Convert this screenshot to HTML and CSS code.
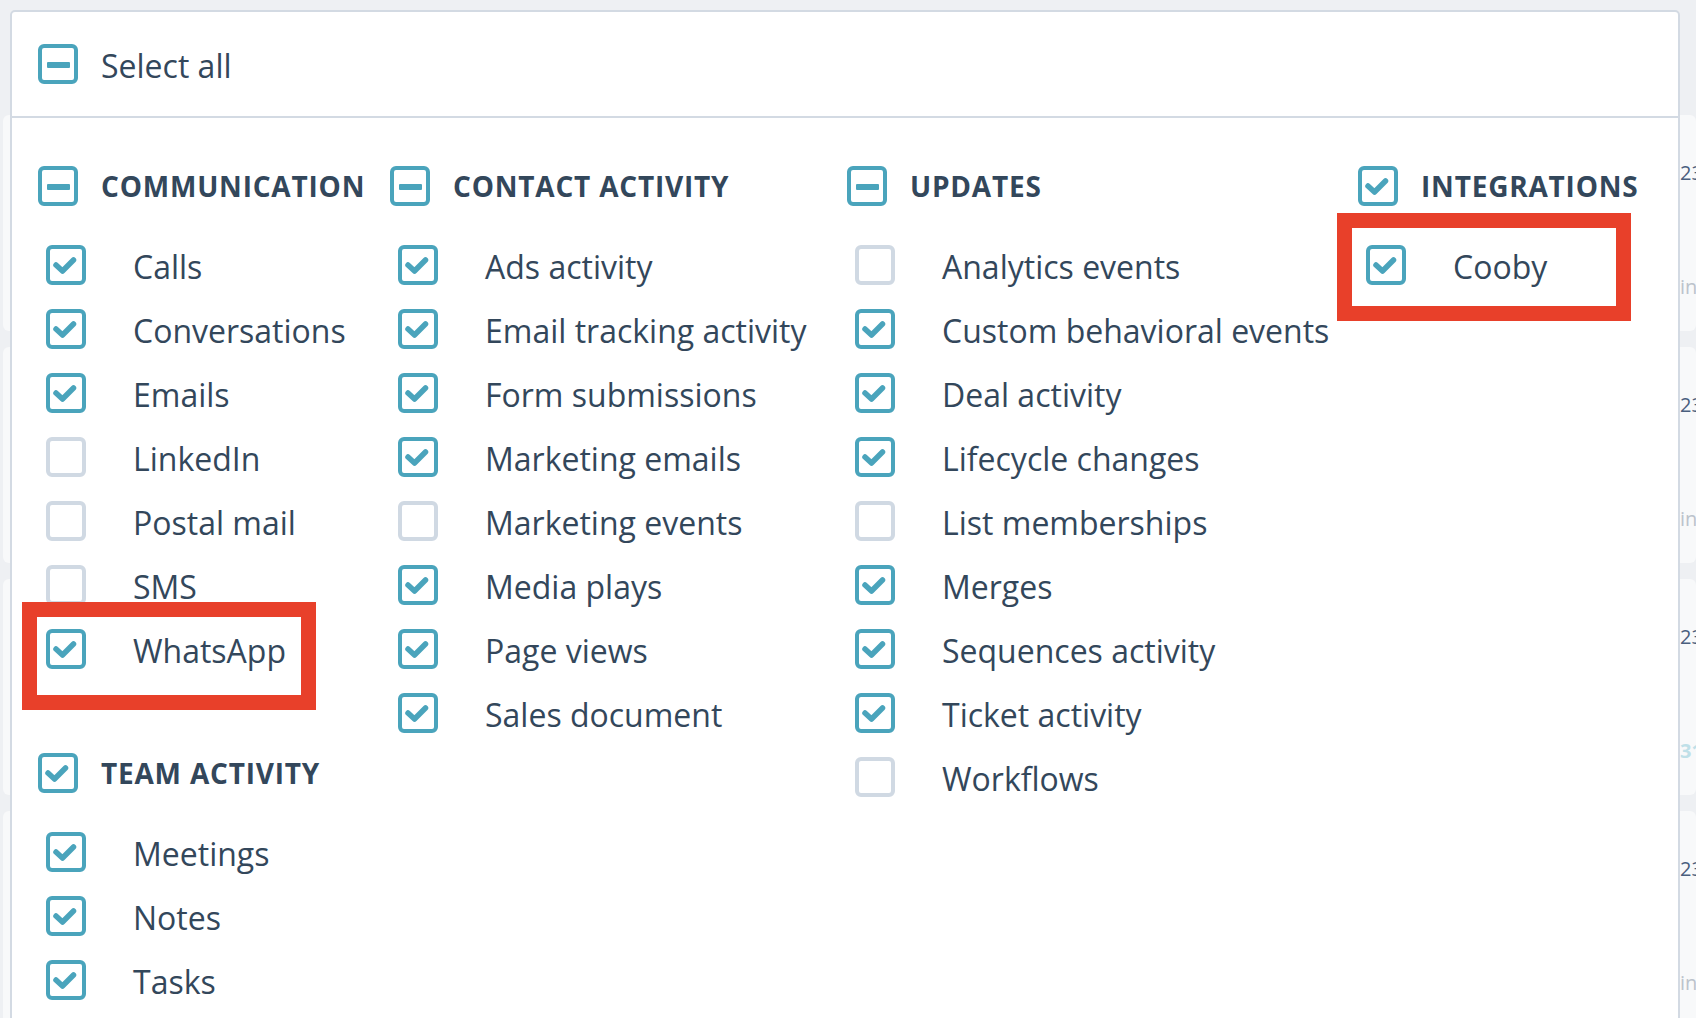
FILE: index.html
```html
<!DOCTYPE html>
<html>
  <head>
    <title>Activity filters</title>
    <link rel="stylesheet" href="styles.css">
  </head>
  <body>
    <!-- timeline cards behind the dropdown -->
    <div class="timeline">
      <div class="card"><div class="time">23</div><div class="meta">in</div></div>
      <div class="card"><div class="time">23</div><div class="meta">in</div></div>
      <div class="card"><div class="time">23</div><div class="meta link">31</div></div>
      <div class="card"><div class="time">23</div><div class="meta">in</div></div>
    </div>

    <div class="filter-panel">
      <div class="panel-head">
        <div class="select-all"><span class="box partial"></span><span class="label">Select all</span></div>
      </div>
      <div class="panel-body">
        <div class="col">
          <div class="group">
            <div class="group-title"><span class="box partial"></span>COMMUNICATION</div>
            <ul class="items">
              <li><span class="box checked"><svg viewBox="0 0 32 32"><polyline points="6,16 12.5,22 23.5,11"/></svg></span><span class="label">Calls</span></li>
              <li><span class="box checked"><svg viewBox="0 0 32 32"><polyline points="6,16 12.5,22 23.5,11"/></svg></span><span class="label">Conversations</span></li>
              <li><span class="box checked"><svg viewBox="0 0 32 32"><polyline points="6,16 12.5,22 23.5,11"/></svg></span><span class="label">Emails</span></li>
              <li><span class="box"></span><span class="label">LinkedIn</span></li>
              <li><span class="box"></span><span class="label">Postal mail</span></li>
              <li><span class="box"></span><span class="label">SMS</span></li>
              <li><span class="box checked"><svg viewBox="0 0 32 32"><polyline points="6,16 12.5,22 23.5,11"/></svg></span><span class="label">WhatsApp</span></li>
            </ul>
          </div>
          <div class="group">
            <div class="group-title"><span class="box checked"><svg viewBox="0 0 32 32"><polyline points="6,16 12.5,22 23.5,11"/></svg></span>TEAM ACTIVITY</div>
            <ul class="items">
              <li><span class="box checked"><svg viewBox="0 0 32 32"><polyline points="6,16 12.5,22 23.5,11"/></svg></span><span class="label">Meetings</span></li>
              <li><span class="box checked"><svg viewBox="0 0 32 32"><polyline points="6,16 12.5,22 23.5,11"/></svg></span><span class="label">Notes</span></li>
              <li><span class="box checked"><svg viewBox="0 0 32 32"><polyline points="6,16 12.5,22 23.5,11"/></svg></span><span class="label">Tasks</span></li>
            </ul>
          </div>
        </div>

        <div class="col">
          <div class="group">
            <div class="group-title"><span class="box partial"></span>CONTACT ACTIVITY</div>
            <ul class="items">
              <li><span class="box checked"><svg viewBox="0 0 32 32"><polyline points="6,16 12.5,22 23.5,11"/></svg></span><span class="label">Ads activity</span></li>
              <li><span class="box checked"><svg viewBox="0 0 32 32"><polyline points="6,16 12.5,22 23.5,11"/></svg></span><span class="label">Email tracking activity</span></li>
              <li><span class="box checked"><svg viewBox="0 0 32 32"><polyline points="6,16 12.5,22 23.5,11"/></svg></span><span class="label">Form submissions</span></li>
              <li><span class="box checked"><svg viewBox="0 0 32 32"><polyline points="6,16 12.5,22 23.5,11"/></svg></span><span class="label">Marketing emails</span></li>
              <li><span class="box"></span><span class="label">Marketing events</span></li>
              <li><span class="box checked"><svg viewBox="0 0 32 32"><polyline points="6,16 12.5,22 23.5,11"/></svg></span><span class="label">Media plays</span></li>
              <li><span class="box checked"><svg viewBox="0 0 32 32"><polyline points="6,16 12.5,22 23.5,11"/></svg></span><span class="label">Page views</span></li>
              <li><span class="box checked"><svg viewBox="0 0 32 32"><polyline points="6,16 12.5,22 23.5,11"/></svg></span><span class="label">Sales document</span></li>
            </ul>
          </div>
        </div>

        <div class="col">
          <div class="group">
            <div class="group-title"><span class="box partial"></span>UPDATES</div>
            <ul class="items">
              <li><span class="box"></span><span class="label">Analytics events</span></li>
              <li><span class="box checked"><svg viewBox="0 0 32 32"><polyline points="6,16 12.5,22 23.5,11"/></svg></span><span class="label">Custom behavioral events</span></li>
              <li><span class="box checked"><svg viewBox="0 0 32 32"><polyline points="6,16 12.5,22 23.5,11"/></svg></span><span class="label">Deal activity</span></li>
              <li><span class="box checked"><svg viewBox="0 0 32 32"><polyline points="6,16 12.5,22 23.5,11"/></svg></span><span class="label">Lifecycle changes</span></li>
              <li><span class="box"></span><span class="label">List memberships</span></li>
              <li><span class="box checked"><svg viewBox="0 0 32 32"><polyline points="6,16 12.5,22 23.5,11"/></svg></span><span class="label">Merges</span></li>
              <li><span class="box checked"><svg viewBox="0 0 32 32"><polyline points="6,16 12.5,22 23.5,11"/></svg></span><span class="label">Sequences activity</span></li>
              <li><span class="box checked"><svg viewBox="0 0 32 32"><polyline points="6,16 12.5,22 23.5,11"/></svg></span><span class="label">Ticket activity</span></li>
              <li><span class="box"></span><span class="label">Workflows</span></li>
            </ul>
          </div>
        </div>

        <div class="col">
          <div class="group">
            <div class="group-title"><span class="box checked"><svg viewBox="0 0 32 32"><polyline points="6,16 12.5,22 23.5,11"/></svg></span>INTEGRATIONS</div>
            <ul class="items">
              <li><span class="box checked"><svg viewBox="0 0 32 32"><polyline points="6,16 12.5,22 23.5,11"/></svg></span><span class="label">Cooby</span></li>
            </ul>
          </div>
        </div>
      </div>
    </div>

    <!-- annotation boxes -->
    <div class="mark mark-whatsapp"></div>
    <div class="mark mark-cooby"></div>
  </body>
</html>
```

FILE: styles.css
```css
body {
  margin: 0;
  background: #eef0f3;
  font-family: "Open Sans", "Noto Sans", sans-serif;
  color: #33475b;
  overflow: hidden;
}

.timeline {
  padding-top: 115px;
}
.card {
  margin-left: 3px;
  height: 216px;
  margin-bottom: 16px;
  box-sizing: border-box;
  padding: 44px 0 0 1677px;
  background: #f8f9fa;
  border-radius: 6px;
  white-space: nowrap;
}
.time {
  font-size: 20px;
  line-height: 28px;
  color: #4a5f7e;
}
.meta {
  margin-top: 86px;
  font-size: 20px;
  line-height: 28px;
  color: #bcc3cc;
}
.meta.link {
  color: #bfe0e8;
  font-weight: 700;
}

.filter-panel {
  position: absolute;
  left: 10px;
  top: 10px;
  width: 1670px;
  height: 1040px;
  box-sizing: border-box;
  background: #fff;
  border: 2px solid #d3dae3;
  border-radius: 5px;
}

.panel-head {
  height: 106px;
  box-sizing: border-box;
  border-bottom: 2px solid #d3dae3;
  padding-left: 26px;
  display: flex;
  align-items: center;
}
.select-all {
  display: flex;
  align-items: center;
  font-size: 32px;
}
.select-all .box {
  margin-right: 23px;
}

.label {
  padding-top: 3px;
}

.panel-body {
  padding: 48px 0 0 26px;
  display: grid;
  grid-template-columns: 352px 457px 511px 1fr;
}

.group + .group {
  margin-top: 72px;
}
.group-title {
  height: 40px;
  display: flex;
  align-items: center;
  font-size: 28px;
  font-weight: 700;
  letter-spacing: 0.8px;
  white-space: nowrap;
}
.group-title .box {
  margin-right: 23px;
}

.items {
  list-style: none;
  margin: 27px 0 0;
  padding: 0;
}
.items li {
  height: 64px;
  display: flex;
  align-items: center;
  padding-left: 8px;
  font-size: 32px;
  white-space: nowrap;
}
.items .box {
  margin-right: 47px;
}

.box {
  flex: none;
  position: relative;
  width: 40px;
  height: 40px;
  box-sizing: border-box;
  border: 4px solid #d0d9e3;
  border-radius: 6px;
}
.box.checked,
.box.partial {
  border-color: #4aa4bc;
}
.box svg {
  display: block;
  width: 32px;
  height: 32px;
  fill: none;
  stroke: #4aa4bc;
  stroke-width: 5.5;
  stroke-linecap: round;
  stroke-linejoin: round;
}
.box.partial::after {
  content: "";
  position: absolute;
  left: 4.5px;
  top: 13.5px;
  width: 23px;
  height: 6.5px;
  background: #4aa4bc;
  border-radius: 1px;
}

.mark {
  position: absolute;
  box-sizing: border-box;
  width: 294px;
  height: 108px;
  border: 15px solid #e8402a;
}
.mark-whatsapp {
  left: 22px;
  top: 602px;
}
.mark-cooby {
  left: 1337px;
  top: 213px;
}
```
